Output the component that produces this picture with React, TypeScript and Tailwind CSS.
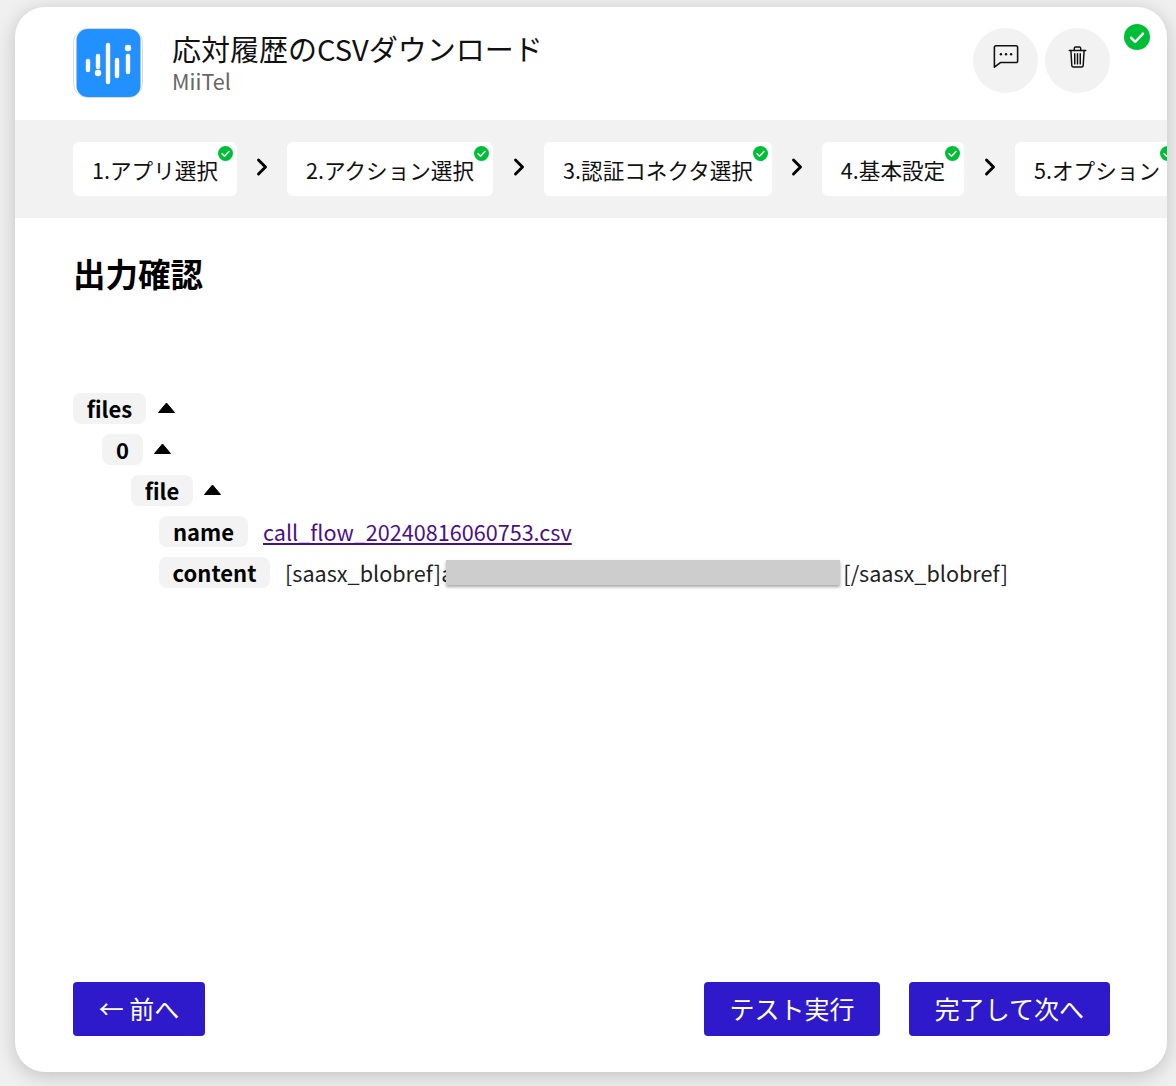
import { ChevronRight } from 'lucide-react';

const font = { fontFamily: '"Noto Sans CJK JP", "Noto Sans", sans-serif' };

const CheckBadge = ({ size, className }: { size: number; className: string }) => (
  <svg className={className} width={size} height={size} viewBox="0 0 26 26">
    <circle cx="13" cy="13" r="13" fill="#00bf36" />
    <path d="M7 13.6l4.2 4.2L19 9.6" fill="none" stroke="#fff" strokeWidth="2.4" strokeLinecap="round" strokeLinejoin="round" />
  </svg>
);

const Step = ({ label, className }: { label: string; className: string }) => (
  <div className={`relative shrink-0 flex items-center justify-center h-[54px] bg-white rounded-[6px] text-[21.6px] text-[#111] ${className}`}>
    <span className="whitespace-nowrap mt-[3px]">{label}</span>
    <CheckBadge size={15} className="absolute top-[4px] right-[4px]" />
  </div>
);

const Arrow = ({ className }: { className: string }) => (
  <div className={`shrink-0 flex justify-center -mt-[4px] ${className}`}>
    <ChevronRight size={28} strokeWidth={2.5} color="#000" />
  </div>
);

const Key = ({ label, className }: { label: string; className: string }) => (
  <div className={`h-[31px] flex items-center justify-center bg-[#f3f3f3] rounded-[8px] text-[22px] font-bold text-black leading-none ${className}`}>
    <span className="-mt-[2px]">{label}</span>
  </div>
);

const Caret = ({ className }: { className: string }) => (
  <svg className={className} width="17" height="11" viewBox="0 0 17 11">
    <path d="M8.5 1L16.5 10.5H0.5Z" fill="#000" stroke="#000" strokeLinejoin="round" />
  </svg>
);

const NavButton = ({ label, className }: { label: string; className: string }) => (
  <button className={`h-[54px] bg-[#2e1acb] rounded-[4px] text-white text-[25px] flex items-center justify-center whitespace-nowrap ${className}`}>
    {label}
  </button>
);

export default function App() {
  return (
    <div style={font} className="h-[1086px] overflow-hidden bg-[#f0f0f0] pt-[7px] pl-[15px] pr-[9px]">
      <div className="relative h-[1065px] bg-white rounded-[30px] overflow-hidden shadow-[0_4px_20px_rgba(0,0,0,0.2)] flex flex-col">
        <CheckBadge size={26} className="absolute top-[17px] right-[17px]" />

        <div className="h-[113px] shrink-0 flex items-start pl-[58px] pt-[21px]">
          <svg width="70" height="70" viewBox="0 0 70 70" className="shrink-0">
            <rect x="0.5" y="0.5" width="69" height="69" rx="14" fill="#fff" stroke="#dcdcdc" />
            <rect x="3.5" y="1" width="64" height="68" rx="11" fill="#2290ff" />
            <g stroke="#fff" strokeWidth="4.4" strokeLinecap="round" fill="none">
              <path d="M15 33v9" />
              <path d="M25 28v11" />
              <path d="M35 17v37" />
              <path d="M44 32v16" />
              <path d="M55 28v16" />
            </g>
            <circle cx="25" cy="45" r="3.2" fill="#fff" />
            <circle cx="55" cy="20" r="3.2" fill="#fff" />
          </svg>
          <div className="ml-[29px] flex flex-col">
            <div className="text-[29px] leading-[38px] text-[#111] mt-[1px] whitespace-nowrap">応対履歴のCSVダウンロード</div>
            <div className="text-[21.6px] leading-[24px] text-[#666] mt-[2px]">MiiTel</div>
          </div>
          <div className="ml-auto mr-[57px] flex gap-[7px]">
            <div className="w-[65px] h-[65px] rounded-full bg-[#f2f2f2] flex items-center justify-center">
              <svg width="26" height="25" viewBox="0 0 28 26" className="-mt-[9px]">
                <path d="M3 1.5h22a1.5 1.5 0 0 1 1.5 1.5v15a1.5 1.5 0 0 1-1.5 1.5H8L1.5 24.5V3A1.5 1.5 0 0 1 3 1.5Z" fill="none" stroke="#111" strokeWidth="1.7" strokeLinejoin="round" />
                <circle cx="8.5" cy="10.5" r="1.3" fill="#111" />
                <circle cx="14" cy="10.5" r="1.3" fill="#111" />
                <circle cx="19.5" cy="10.5" r="1.3" fill="#111" />
              </svg>
            </div>
            <div className="w-[65px] h-[65px] rounded-full bg-[#f2f2f2] flex items-center justify-center">
              <svg width="19" height="22" viewBox="0 0 20 24" className="-mt-[8px]">
                <g fill="none" stroke="#111" strokeWidth="1.6" strokeLinecap="round" strokeLinejoin="round">
                  <path d="M1 5h18" />
                  <path d="M6.5 5V2.6c0-.8.6-1.4 1.4-1.4h4.2c.8 0 1.4.6 1.4 1.4V5" />
                  <path d="M2.8 5l1 16.4c.1.9.8 1.6 1.7 1.6h9c.9 0 1.6-.7 1.7-1.6l1-16.4" />
                  <path d="M7 8.5v11M10 8.5v11M13 8.5v11" />
                </g>
              </svg>
            </div>
          </div>
        </div>

        <div className="h-[98px] shrink-0 bg-[#f2f2f2] flex items-center pl-[58px] overflow-hidden">
          <Step label="1.アプリ選択" className="w-[164px]" />
          <Arrow className="w-[50px]" />
          <Step label="2.アクション選択" className="w-[206px]" />
          <Arrow className="w-[51px]" />
          <Step label="3.認証コネクタ選択" className="w-[228px]" />
          <Arrow className="w-[50px]" />
          <Step label="4.基本設定" className="w-[142px]" />
          <Arrow className="w-[51px]" />
          <Step label="5.オプション" className="w-[164px]" />
        </div>

        <div className="flex-1 flex flex-col pl-[58px] pr-[57px]">
          <h2 className="text-[32.5px] font-bold text-black leading-[44px] mt-[33px]">出力確認</h2>

          <div className="mt-[98px] flex flex-col gap-[10px]">
            <div className="flex items-center">
              <Key label="files" className="w-[73px]" />
              <Caret className="ml-[12px] -mt-[2px]" />
            </div>
            <div className="flex items-center pl-[29px]">
              <Key label="0" className="w-[41px]" />
              <Caret className="ml-[11px] -mt-[2px]" />
            </div>
            <div className="flex items-center pl-[58px]">
              <Key label="file" className="w-[62px]" />
              <Caret className="ml-[11px] -mt-[2px]" />
            </div>
            <div className="flex items-center pl-[86px]">
              <Key label="name" className="w-[89px]" />
              <a href="#" className="ml-[15px] text-[21.6px] leading-none text-[#4b0f8a] underline whitespace-nowrap">call_flow_20240816060753.csv</a>
            </div>
            <div className="flex items-center pl-[86px]">
              <Key label="content" className="w-[111px]" />
              <div className="ml-[15px] flex items-center text-[21.6px] leading-none text-[#222] whitespace-nowrap">
                <span>[saasx_blobref]a</span>
                <span className="-ml-[7px] w-[394px] h-[25px] bg-[#cdcdcd] shadow-[0_2px_3px_rgba(0,0,0,0.35)]" />
                <span className="ml-[3px]">[/saasx_blobref]</span>
              </div>
            </div>
          </div>

          <div className="mt-auto mb-[36px] flex items-center">
            <NavButton label="← 前へ" className="w-[132px]" />
            <NavButton label="テスト実行" className="w-[176px] ml-auto" />
            <NavButton label="完了して次へ" className="w-[201px] ml-[29px]" />
          </div>
        </div>
      </div>
    </div>
  );
}
